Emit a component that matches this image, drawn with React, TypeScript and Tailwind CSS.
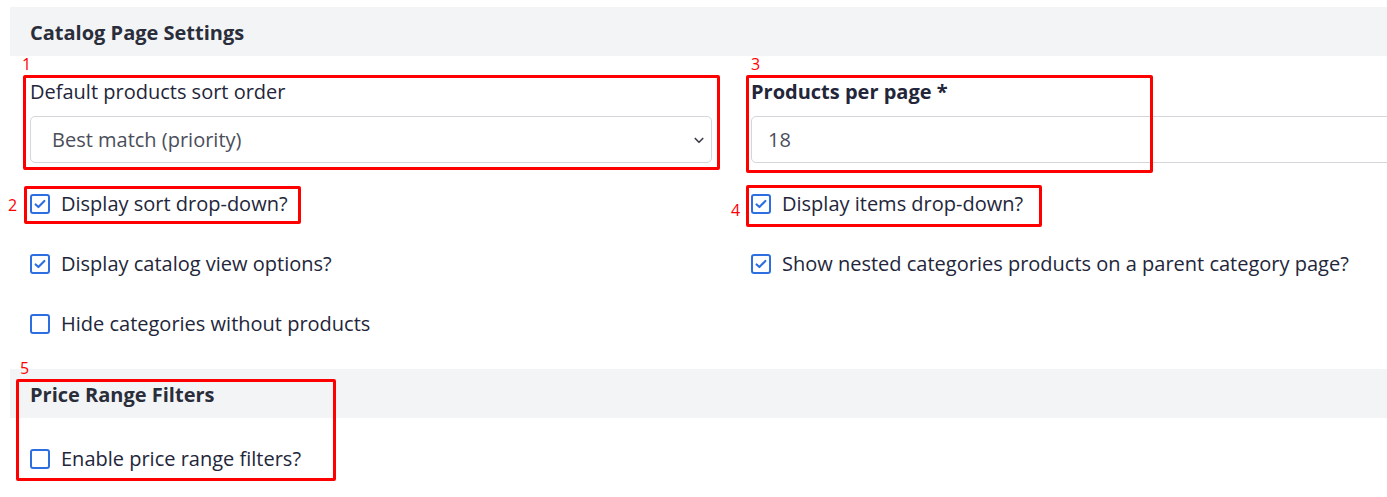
import React from 'react';

const font = { fontFamily: '"Open Sans", "Noto Sans", sans-serif' };

const Check: React.FC<{ checked?: boolean }> = ({ checked }) => (
  <span className="flex h-[20px] w-[20px] shrink-0 items-center justify-center rounded-[3px] border-2 border-[#2d6fe0] bg-white">
    {checked && (
      <svg viewBox="0 0 16 16" className="h-[14px] w-[14px]" fill="none">
        <path d="M3 8.5l3.2 3L13 4.5" stroke="#2d6fe0" strokeWidth="2.4" strokeLinecap="round" strokeLinejoin="round" />
      </svg>
    )}
  </span>
);

// red annotation number drawn over the page
const Mark: React.FC<{ n: string; className: string }> = ({ n, className }) => (
  <span className={`absolute text-[16px] leading-none text-[#ff0000] ${className}`}>{n}</span>
);

// red annotation frame drawn over the page
const Box: React.FC<{ className: string }> = ({ className }) => (
  <span className={`pointer-events-none absolute rounded-[2px] border-[3px] border-[#ff0000] ${className}`} />
);

const CheckRow: React.FC<{ checked?: boolean; label: string }> = ({ checked, label }) => (
  <label className="flex h-[60px] items-center gap-[11px] text-[20px] text-[#23263a]">
    <Check checked={checked} />
    <span>{label}</span>
  </label>
);

const SectionHeader: React.FC<{ title: string }> = ({ title }) => (
  <div className="flex h-[49px] items-center bg-[#f3f4f6] px-5 pt-[2px] text-[20px] font-bold text-[#2a2d3a]">{title}</div>
);

export default function App() {
  return (
    <div className="h-[497px] w-[1387px] overflow-hidden bg-white pl-[10px] pt-[7px]" style={font}>
      <SectionHeader title="Catalog Page Settings" />

      <div className="grid grid-cols-[682px_1fr] gap-x-[39px] pl-5 pt-[23px]">
        {/* left column */}
        <div className="relative">
          <Mark n="1" className="left-[-8px] top-[-23px]" />
          <Box className="left-[-7px] top-[-4px] h-[95px] w-[697px]" />
          <div className="pt-[1px] text-[20px] leading-[23px] text-[#23263a]">Default products sort order</div>
          <div className="mt-[13px] flex h-[47px] items-center justify-between rounded-[5px] border border-[#d4d6da] pl-[21px] pr-[6px] text-[20px] text-[#4a4e5a]">
            <span>Best match (priority)</span>
            <svg viewBox="0 0 16 16" className="h-[12px] w-[12px]" fill="none">
              <path d="M3 6l5 5 5-5" stroke="#3a3d48" strokeWidth="2.2" strokeLinecap="round" strokeLinejoin="round" />
            </svg>
          </div>
          <div className="mt-[11px]">
            <div className="relative">
              <Mark n="2" className="left-[-22px] top-[23px]" />
              <Box className="left-[-6px] top-[12px] h-[38px] w-[277px]" />
              <CheckRow checked label="Display sort drop-down?" />
            </div>
            <CheckRow checked label="Display catalog view options?" />
            <CheckRow label="Hide categories without products" />
          </div>
        </div>

        {/* right column */}
        <div className="relative">
          <Mark n="3" className="left-[0px] top-[-23px]" />
          <Box className="left-[-5px] top-[-4px] h-[98px] w-[407px]" />
          <div className="pt-[1px] text-[20px] font-bold leading-[23px] text-[#23263a]">Products per page *</div>
          <div className="mt-[13px] flex h-[47px] w-[700px] items-center rounded-l-[5px] border border-[#d4d6da] pl-[16px] text-[20px] text-[#4a4e5a]">
            18
          </div>
          <div className="mt-[11px]">
            <div className="relative">
              <Mark n="4" className="left-[-20px] top-[28px]" />
              <Box className="left-[-5px] top-[11px] h-[42px] w-[296px]" />
              <CheckRow checked label="Display items drop-down?" />
            </div>
            <CheckRow checked label="Show nested categories products on a parent category page?" />
          </div>
        </div>
      </div>

      <div className="relative mt-[15px]">
        <Mark n="5" className="left-[10px] top-[-9px]" />
        <Box className="left-[6px] top-[10px] h-[102px] w-[320px]" />
        <SectionHeader title="Price Range Filters" />
        <div className="pl-5 pt-[11px]">
          <CheckRow label="Enable price range filters?" />
        </div>
      </div>
    </div>
  );
}
